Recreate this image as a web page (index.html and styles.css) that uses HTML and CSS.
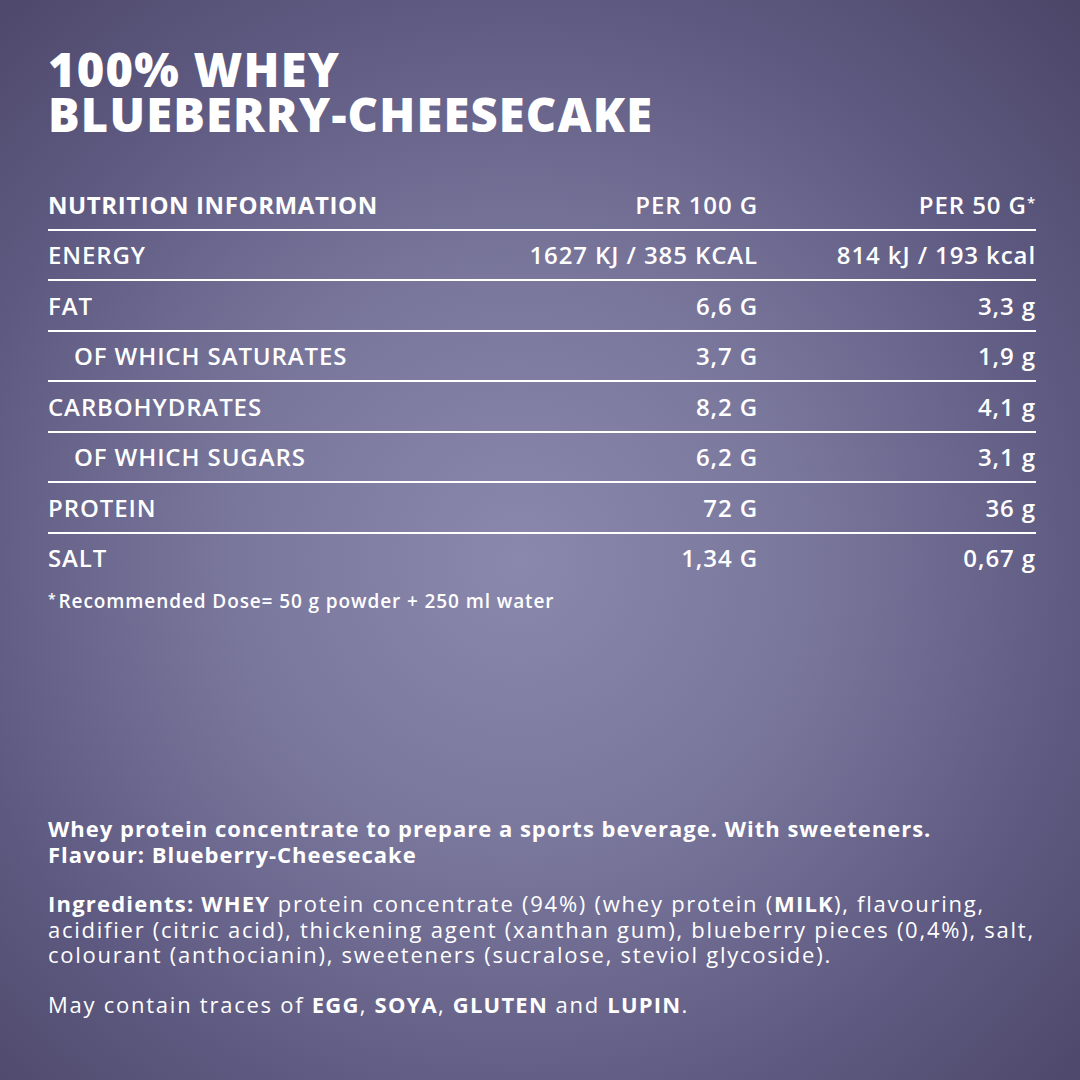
FILE: index.html
```html
<!DOCTYPE html>
<html lang="en">
<head>
<meta charset="utf-8">
<title>100% Whey Blueberry-Cheesecake</title>
<link rel="stylesheet" href="styles.css">
</head>
<body>
<main class="page">
  <h1 class="title"><span class="tline">100% WHEY</span><span class="tline">BLUEBERRY-CHEESECAKE</span></h1>

  <div class="table">
    <div class="row head">
      <span class="name">NUTRITION INFORMATION</span>
      <span class="val">PER 100 G</span>
      <span class="val">PER 50 G<sup>*</sup></span>
    </div>
    <div class="row">
      <span class="name">ENERGY</span>
      <span class="val">1627 KJ / 385 KCAL</span>
      <span class="val">814 kJ / 193 kcal</span>
    </div>
    <div class="row">
      <span class="name">FAT</span>
      <span class="val">6,6 G</span>
      <span class="val">3,3 g</span>
    </div>
    <div class="row">
      <span class="name sub">OF WHICH SATURATES</span>
      <span class="val">3,7 G</span>
      <span class="val">1,9 g</span>
    </div>
    <div class="row">
      <span class="name">CARBOHYDRATES</span>
      <span class="val">8,2 G</span>
      <span class="val">4,1 g</span>
    </div>
    <div class="row">
      <span class="name sub">OF WHICH SUGARS</span>
      <span class="val">6,2 G</span>
      <span class="val">3,1 g</span>
    </div>
    <div class="row">
      <span class="name">PROTEIN</span>
      <span class="val">72 G</span>
      <span class="val">36 g</span>
    </div>
    <div class="row last">
      <span class="name">SALT</span>
      <span class="val">1,34 G</span>
      <span class="val">0,67 g</span>
    </div>
  </div>

  <p class="footnote"><span class="ast">*</span>Recommended Dose= 50 g powder + 250 ml water</p>

  <section class="info">
    <p class="desc">Whey protein concentrate to prepare a sports beverage. With sweeteners.<br>Flavour: Blueberry-Cheesecake</p>
    <p><b>Ingredients: WHEY</b> protein concentrate (94%) (whey protein (<b>MILK</b>), flavouring,<br>acidifier (citric acid), thickening agent (xanthan gum), blueberry pieces (0,4%), salt,<br>colourant (anthocianin), sweeteners (sucralose, steviol glycoside).</p>
    <p>May contain traces of <b>EGG</b>, <b>SOYA</b>, <b>GLUTEN</b> and <b>LUPIN</b>.</p>
  </section>
</main>
</body>
</html>
```

FILE: styles.css
```css
html, body {
  margin: 0;
  padding: 0;
}

body {
  width: 1080px;
  height: 1080px;
  overflow: hidden;
  background: radial-gradient(ellipse 75% 75% at 48% 52%, #8a88ad 0%, #7a779d 35%, #5e5980 70%, #4a4466 100%);
  color: #ffffff;
  font-family: "Open Sans", Lato, "Liberation Sans", sans-serif;
}

.page {
  box-sizing: border-box;
  height: 1080px;
  padding: 42px 44px 63px 48px;
  display: flex;
  flex-direction: column;
}

.title {
  margin: 0;
  font-size: 47px;
  font-weight: 800;
  letter-spacing: 1.2px;
  display: flex;
  flex-direction: column;
}

.tline {
  display: block;
  height: 45px;
  line-height: 54px;
}

.table {
  margin-top: 48px;
  display: flex;
  flex-direction: column;
}

.row {
  display: grid;
  grid-template-columns: 1fr 260px 278px;
  align-items: center;
  height: 48.5px;
  border-bottom: 2px solid #ffffff;
  font-size: 24px;
  font-weight: 600;
  letter-spacing: 0.9px;
}

.row.last {
  border-bottom: none;
}

.row.head .name {
  font-weight: 700;
  letter-spacing: 0.6px;
}

.val {
  text-align: right;
}

.sub {
  padding-left: 26px;
}

sup {
  font-size: 15px;
  vertical-align: 6px;
  line-height: 0;
}

.footnote {
  margin: 6px 0 0;
  font-size: 19px;
  font-weight: 600;
  letter-spacing: 0.9px;
}

.ast {
  font-size: 14px;
  vertical-align: 4px;
  margin-right: 2px;
}

.info {
  margin-top: auto;
  font-size: 22px;
  line-height: 25.5px;
  font-weight: 500;
  letter-spacing: 1.75px;
}

.info p {
  margin: 0 0 24px;
}

.info p:last-child {
  margin-bottom: 0;
}

.info .desc {
  font-weight: 700;
  letter-spacing: 1px;
}

.info b {
  font-weight: 700;
  letter-spacing: 1.2px;
}
```
